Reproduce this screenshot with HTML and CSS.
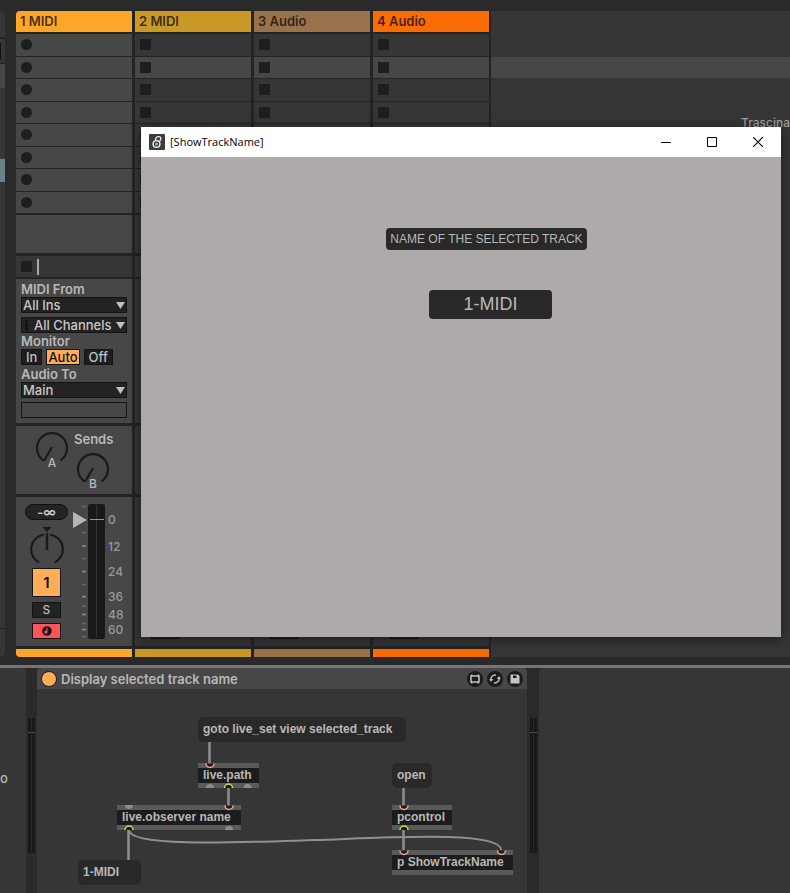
FILE: index.html
```html
<!DOCTYPE html>
<html lang="en">
<head>
<meta charset="utf-8">
<meta name="viewport" content="width=device-width, initial-scale=1">
<title>Session</title>
<link rel="stylesheet" href="styles.css">
</head>
<body>
<svg class="defs" aria-hidden="true">
  <symbol id="knob" viewBox="0 0 34 34"><path d="M8.500 29.500A15 15 0 1 1 25.500 29.500" fill="none" stroke="#1a1a1a" stroke-width="2.200"/><path d="M17 16L9 30" stroke="#1a1a1a" stroke-width="2.200"/></symbol>
  <symbol id="arrow" viewBox="0 0 9 7"><path d="M0 0h9L4.500 7z" fill="#c0c0c0"/></symbol>
</svg>

<main class="session">
  <aside class="edge" aria-hidden="true"><i class="edge-top"></i><i class="edge-mark"></i><i class="edge-lit"></i><i class="edge-scroll"></i><i class="edge-foot"></i></aside>

  <section class="tracks">
    <article class="track selected">
      <h2 class="name amber">1 MIDI</h2>
      <div class="slots"><button aria-label="Record clip 1"></button><button aria-label="Record clip 2"></button><button aria-label="Record clip 3"></button><button aria-label="Record clip 4"></button><button aria-label="Record clip 5"></button><button aria-label="Record clip 6"></button><button aria-label="Record clip 7"></button><button aria-label="Record clip 8"></button></div>
      <div class="blank"></div>
      <div class="status"><button class="stop" aria-label="Stop track"></button><i class="cursor"></i></div>
      <div class="io">
        <label for="midi-from">MIDI From</label>
        <span class="pick"><select id="midi-from"><option>All Ins</option></select><svg><use href="#arrow"/></svg></span>
        <span class="pick channels"><select aria-label="Channel"><option>All Channels</option></select><svg><use href="#arrow"/></svg><i class="dots"></i></span>
        <span class="label">Monitor</span>
        <div class="monitor"><button>In</button><button class="on">Auto</button><button>Off</button></div>
        <label class="spaced" for="audio-to">Audio To</label>
        <span class="pick"><select id="audio-to"><option>Main</option></select><svg><use href="#arrow"/></svg></span>
        <input class="blank-field" type="text" aria-label="Output channel">
      </div>
      <div class="sends">
        <div class="knob"><svg><use href="#knob"/></svg><span>A</span></div>
        <div class="send-b"><span class="label">Sends</span><div class="knob"><svg><use href="#knob"/></svg><span>B</span></div></div>
      </div>
      <div class="mixer">
        <div class="strip">
          <output class="peak">-∞</output>
          <svg class="pan" viewBox="0 0 34 38"><path d="M12.500 1h9L17 6z" fill="#1a1a1a"/><path d="M9 36.500A15 15 0 0 1 14 8.500M20 8.500A15 15 0 0 1 25 36.500" fill="none" stroke="#1a1a1a" stroke-width="2.200"/><path d="M17 7v17" stroke="#1a1a1a" stroke-width="2.400"/></svg>
          <button class="active">1</button>
          <button class="solo">S</button>
          <button class="arm" aria-label="Arm"><svg viewBox="0 0 10 10"><circle cx="5" cy="5" r="4.800" fill="#171717"/><path d="M5.500 1.500v4.500a1.600 1.600 0 1 1-1.500-1.500h.5v-3z" fill="#ff5559"/></svg></button>
        </div>
        <div class="fader">
          <svg viewBox="0 0 33 135"><g stroke="#696969" stroke-width="1.500"><path d="M9 2.500h4M9 28.500h4M9 42h4M9 54.500h4M9 67.500h4M9 80.500h4M9 93h4M9 102h4M9 110.500h4M9 119.500h4M9 125.500h4M9 132.500h4"/></g><g stroke="#888" stroke-width="1.500"><path d="M9 42h4M9 67.500h4M9 92.500h4M9 110.500h4M9 125.500h4"/></g><rect x="15" width="17" height="135" rx="2" fill="#191919"/><path d="M23.500 1v133" stroke="#333"/><path d="M17 15.500h14" stroke="#999"/></svg>
          <input type="range" min="0" max="119" value="111" aria-label="Volume">
        </div>
        <ol class="scale"><li>0</li><li>12</li><li>24</li><li>36</li><li>48</li><li>60</li></ol>
      </div>
      <div class="foot amber"></div>
    </article>

    <article class="track">
      <h2 class="name gold">2 MIDI</h2>
      <div class="slots"><button aria-label="Stop 1"></button><button aria-label="Stop 2"></button><button aria-label="Stop 3"></button><button aria-label="Stop 4"></button><button aria-label="Stop 5"></button><button aria-label="Stop 6"></button><button aria-label="Stop 7"></button><button aria-label="Stop 8"></button></div>
      <div class="blank"></div><div class="status"></div><div class="io"></div><div class="sends"></div>
      <div class="mixer"><div class="strip"><button class="arm" aria-label="Arm"></button></div></div>
      <div class="foot gold"></div>
    </article>
    <article class="track">
      <h2 class="name brown">3 Audio</h2>
      <div class="slots"><button aria-label="Stop 1"></button><button aria-label="Stop 2"></button><button aria-label="Stop 3"></button><button aria-label="Stop 4"></button><button aria-label="Stop 5"></button><button aria-label="Stop 6"></button><button aria-label="Stop 7"></button><button aria-label="Stop 8"></button></div>
      <div class="blank"></div><div class="status"></div><div class="io"></div><div class="sends"></div>
      <div class="mixer"><div class="strip"><button class="arm" aria-label="Arm"></button></div></div>
      <div class="foot brown"></div>
    </article>
    <article class="track">
      <h2 class="name orange">4 Audio</h2>
      <div class="slots"><button aria-label="Stop 1"></button><button aria-label="Stop 2"></button><button aria-label="Stop 3"></button><button aria-label="Stop 4"></button><button aria-label="Stop 5"></button><button aria-label="Stop 6"></button><button aria-label="Stop 7"></button><button aria-label="Stop 8"></button></div>
      <div class="blank"></div><div class="status"></div><div class="io"></div><div class="sends"></div>
      <div class="mixer"><div class="strip"><button class="arm" aria-label="Arm"></button></div></div>
      <div class="foot orange"></div>
    </article>
  </section>

  <section class="drop"><div class="drop-row"></div><p>Trascina</p></section>

  <section class="window">
    <header class="titlebar">
      <svg class="app" viewBox="0 0 16 16"><rect width="16" height="16" rx="1" fill="#3c3c3c"/><circle cx="7.500" cy="10" r="3.400" fill="none" stroke="#f2f2f2" stroke-width="1.400"/><path d="M6.500 6.500C6.500 1.500 12 1.500 11.800 5 11.600 7 10.500 7.500 9.500 8" fill="none" stroke="#f2f2f2" stroke-width="1.300"/><circle cx="7.500" cy="10" r="1.500" fill="#62c8c4"/></svg>
      <h1>[ShowTrackName]</h1>
      <button aria-label="Minimize"><svg viewBox="0 0 10 10"><path d="M0 5.500h10" stroke="#000"/></svg></button>
      <button aria-label="Maximize"><svg viewBox="0 0 10 10"><path d="M.5.5h9v9h-9z" fill="none" stroke="#000"/></svg></button>
      <button aria-label="Close"><svg viewBox="0 0 10 10"><path d="M0 0l10 10M10 0L0 10" stroke="#000" stroke-width="1.100"/></svg></button>
    </header>
    <div class="view">
      <p class="caption">NAME OF THE SELECTED TRACK</p>
      <p class="readout">1-MIDI</p>
    </div>
  </section>
</main>

<section class="devices">
  <div class="chain-prev">o</div>
  <div class="meter"><i></i><i></i></div>
  <article class="device">
    <header class="device-bar">
      <button class="power" aria-label="Device on"></button>
      <h2>Display selected track name</h2>
      <button class="round" aria-label="Edit"><svg viewBox="0 0 16 16"><path d="M4 5h8v6H4zM4.800 3.500V5M11.200 3.500V5M4.800 11v1.500M11.200 11v1.500" fill="none" stroke="#bdbdbd" stroke-width="1.600"/></svg></button>
      <button class="round" aria-label="Swap"><svg viewBox="0 0 16 16"><path d="M4 9.500A4.200 4.200 0 0 1 9 4.200M12 6.500A4.200 4.200 0 0 1 7 11.800" fill="none" stroke="#bdbdbd" stroke-width="1.500"/><path d="M2.200 8h4L4 11zM9.800 8h4L12 5z" fill="#bdbdbd"/></svg></button>
      <button class="round" aria-label="Save"><svg viewBox="0 0 16 16"><path d="M3.500 3.500h7.500l1.500 1.500v7.500h-9z" fill="#c4c4c4"/><path d="M6 4.500h3.500v2.500H6z" fill="#1b1b1b"/></svg></button>
    </header>
    <div class="patch">
      <button class="msg goto">goto live_set view selected_track</button>
      <div class="obj path">live.path</div>
      <div class="obj observer">live.observer name</div>
      <button class="msg result">1-MIDI</button>
      <button class="msg open">open</button>
      <div class="obj pcontrol">pcontrol</div>
      <div class="obj sub">p ShowTrackName</div>
      <svg class="cables" viewBox="0 0 490 204">
        <g fill="none" stroke="#8f8f8f" stroke-width="2.500"><path d="M172.500 53v22M191.500 99v18M91.500 141v30M366.500 99v18M366.500 141v20"/><path d="M92 141C92 159 213 153 278 151S464 141 464 161" stroke-width="2"/></g>
        <g fill="#8c8c8c"><path d="M169 99a4 4 0 0 1 8 0zM206.500 99a4 4 0 0 1 8 0zM88 116a4 4 0 0 0 8 0zM188 141a4 4 0 0 1 8 0z"/></g>
        <g fill="#1c1c1c" stroke="#f5a895" stroke-width="1.500"><path d="M169 74.500a4 4 0 0 0 8 0M188 116.500a4 4 0 0 0 8 0M363 116.500a4 4 0 0 0 8 0M363 161.500a4 4 0 0 0 8 0M460.500 161.500a4 4 0 0 0 8 0"/></g>
        <g fill="#1c1c1c" stroke="#cbdc50" stroke-width="1.500"><path d="M187.500 99a4 4 0 0 1 8 0M88 141a4 4 0 0 1 8 0M363 141a4 4 0 0 1 8 0"/></g>
      </svg>
    </div>
  </article>
  <div class="meter"><i></i><i></i></div>
  <div class="chain-next"></div>
</section>
</body>
</html>
```

FILE: styles.css
```css
* { box-sizing: border-box; }
body {
  margin: 0;
  min-height: 100vh;
  display: flex;
  flex-direction: column;
  overflow: hidden;
  background: #2a2a2a;
  color: #b8b8b8;
  font: 500 13px/16px Inter, sans-serif;
}
h1, h2, p, ol { margin: 0; padding: 0; font: inherit; }
button, select, input { margin: 0; padding: 0; border: 0; border-radius: 0; font: inherit; color: inherit; appearance: none; background: none; }
svg { display: block; }
.defs { position: absolute; width: 0; height: 0; }

.session { position: relative; display: flex; padding: 11px 0 8px; border-bottom: 3px solid #757575; }

.edge { display: flex; flex-direction: column; width: 5px; margin-right: 11px; background: #363636; border-radius: 0 5px 5px 0; }
.edge-top { height: 28px; border-bottom: 2px solid #232323; }
.edge-mark { height: 25px; border-bottom: 1px solid #232323; background: linear-gradient(#101010, #101010) 0 4px / 1px 17px no-repeat; }
.edge-lit { height: 24px; background: #474747; }
.edge-scroll { height: 23px; margin-top: 71px; background: #6b818a; }
.edge-foot { flex: 1; margin-bottom: 28px; border-bottom: 1px solid #232323; }

.tracks { display: flex; gap: 3px; padding-right: 2px; background: #242424; border-radius: 4px 0 0 4px; }
.track { display: flex; flex-direction: column; width: 116px; }
.track > * { background: #363636; }
.selected > * { background: #474747; }
.name { height: 21px; margin-bottom: 2px; padding-left: 4px; font-weight: 600; line-height: 21px; color: rgb(20 15 10 / 80%); }
.selected .name { border-top-left-radius: 4px; }
.track > .amber { background: #ffa52a; }
.track > .gold { background: #ca9925; }
.track > .brown { background: #99724b; }
.track > .orange { background: #f96c03; }
.slots { display: grid; grid-template-rows: repeat(8, 1fr); gap: 1px; height: 179px; }
.track > .slots { background: #242424; }
.slots button { display: flex; align-items: center; padding-left: 5px; background: #363636; }
.slots button:nth-child(2), .selected .slots button { background: #474747; }
.slots button::before, .stop { content: ""; width: 11px; height: 11px; background: #1e1e1e; }
.selected .slots button::before { border-radius: 50%; }
.blank { height: 38px; margin: 2px 0 3px; }
.status { display: flex; align-items: center; gap: 5px; height: 21px; margin-bottom: 2px; padding-left: 5px; }
.selected .status { background: #363636; }
.cursor { width: 2px; height: 16px; background: #a8a8a8; }

.io { display: flex; flex-direction: column; height: 144px; margin-bottom: 3px; padding: 2px 5px 5px; }
.io label, .label { font-weight: 600; }
.io .spaced { margin-top: 1px; }
.pick { display: grid; align-items: center; height: 16px; border: 1px solid #141414; background: #232323; color: #c8c8c8; }
.pick > * { grid-area: 1 / 1; }
.pick select { width: 100%; height: 14px; padding-left: 1px; line-height: 14px; }
.pick svg { justify-self: end; width: 9px; height: 7px; margin-right: 1px; pointer-events: none; }
.channels { margin-top: 4px; }
.channels select { padding-left: 12px; }
.dots { width: 3px; height: 12px; margin-left: 3px; background: radial-gradient(#111 1px, transparent 2px) 0 0 / 3px 4px; }
.monitor { display: flex; gap: 4px; }
.monitor button { height: 16px; padding: 0 4px; border: 1px solid #141414; background: #1e1e1e; line-height: 14px; color: #c0c0c0; }
.monitor .on { padding: 0 1px; background: #ffad56; color: #111; }
.blank-field { height: 16px; margin-top: 4px; border: 1px solid #141414; }

.sends { display: flex; gap: 7px; height: 68px; margin-bottom: 3px; padding: 5px 0 0 19px; }
.send-b { display: flex; flex-direction: column; gap: 5px; width: 34px; }
.send-b .label { margin-left: -2px; }
.knob { display: grid; width: 34px; height: 38px; justify-items: center; }
.knob > * { grid-area: 1 / 1; }
.knob svg { width: 34px; height: 34px; }
.knob span { align-self: end; font-size: 12px; line-height: 12px; }

.mixer { display: flex; height: 149px; margin-bottom: 3px; padding: 7px 0 7px 9px; }
.strip { display: flex; flex-direction: column; align-items: center; width: 43px; margin-right: 5px; }
.strip > * { flex-shrink: 0; }
.peak { width: 43px; height: 16px; border: 1px solid #111; border-radius: 8px; background: #242424; color: #c8c8c8; text-align: center; font-weight: 600; line-height: 14px; }
.pan { width: 34px; height: 38px; margin-top: 6px; }
.strip button { width: 29px; height: 16px; border: 1px solid #141414; }
.strip .active { height: 29px; margin-top: 4px; background: #ffad56; color: #111; font-size: 15px; font-weight: 600; }
.strip .solo { margin-top: 5px; background: #232323; font-size: 12px; line-height: 14px; }
.strip .arm { display: grid; place-items: center; margin-top: auto; background: #232323; }
.selected .strip .arm { background: #ff5559; }
.arm svg { width: 10px; height: 10px; }
.fader { display: grid; width: 33px; height: 135px; }
.fader > * { grid-area: 1 / 1; }
.fader svg { width: 33px; height: 135px; }
.fader input { width: 14px; height: 135px; writing-mode: vertical-lr; direction: rtl; }
.fader input::-webkit-slider-thumb { appearance: none; width: 14px; height: 16px; background: #b5b5b5; clip-path: polygon(0 0, 100% 50%, 0 100%); }
.scale { display: grid; grid-template-rows: 27px 25px 25px 18px 15px 15px; margin: 8px 0 0 2px; list-style: none; font-size: 12px; line-height: 15px; color: #999; }
.foot { height: 8px; }
.selected .foot { border-bottom-left-radius: 4px; }

.drop { flex: 1; min-width: 0; background: #363636; }
.drop-row { height: 21px; margin-top: 46px; background: #474747; }
.drop p { margin-top: 36px; text-align: right; white-space: nowrap; color: #a0a0a0; font-size: 12px; line-height: 18px; }

.window { position: absolute; top: 127px; left: 141px; right: 9px; background: #aeaaa9; box-shadow: 0 2px 12px rgb(0 0 0 / 50%); }
.titlebar { display: flex; align-items: center; height: 30px; padding-left: 8px; background: #fff; color: #000; }
.titlebar .app { width: 16px; height: 16px; margin-right: 5px; }
.titlebar h1 { flex: 1; font: 11px/30px "Open Sans", sans-serif; }
.titlebar button { display: grid; place-items: center; width: 46px; height: 30px; }
.titlebar button svg { width: 10px; height: 10px; }
.view { position: relative; height: 480px; font-family: "Liberation Sans", sans-serif; font-weight: 400; text-align: center; white-space: nowrap; color: #b8b8b8; }
.view p { position: absolute; border-radius: 4px; background: #292929; }
.view .caption { top: 71px; left: 245px; width: 201px; font-size: 12px; line-height: 22px; }
.view .readout { top: 133px; left: 288px; width: 123px; font-size: 18px; line-height: 29px; }

.devices { flex: 1; display: flex; min-height: 225px; }
.chain-prev { width: 26px; padding-top: 102px; background: #363636; border-top-right-radius: 4px; }
.meter { display: flex; gap: 1px; width: 7px; height: 135px; margin: 50px 2px 0; }
.meter i { flex: 1; background: linear-gradient(#181818 14px, #555 14px 15px, #181818 15px); }
.device { width: 490px; margin-right: 1px; background: #363636; border-radius: 4px 4px 0 0; overflow: hidden; }
.device-bar { display: flex; align-items: center; gap: 4px; height: 21px; padding: 0 4px; background: #474747; }
.device-bar h2 { flex: 1; font-weight: 600; }
.power { width: 16px; height: 16px; border: 1px solid #1b1b1b; border-radius: 50%; background: #ffad56; }
.round { width: 16px; height: 16px; border-radius: 50%; background: #1b1b1b; }
.patch { position: relative; height: 204px; font: bold 12px/25px "Liberation Sans", sans-serif; color: #b8b8b8; white-space: nowrap; }
.msg, .obj { position: absolute; height: 25px; padding-left: 5px; text-align: left; }
.msg { border-radius: 5px; background: #292929; }
.obj { border: solid #5a5a5a; border-width: 5px 0; background: #1c1c1c; line-height: 15px; }
.goto { top: 28px; left: 161px; width: 208px; }
.path { top: 74px; left: 161px; width: 61px; }
.observer { top: 116px; left: 80px; width: 124px; }
.result { top: 171px; left: 41px; width: 63px; }
.open { top: 74px; left: 355px; width: 40px; }
.pcontrol { top: 116px; left: 355px; width: 60px; }
.sub { top: 161px; left: 355px; width: 121px; }
.cables { position: absolute; top: 0; left: 0; width: 490px; height: 204px; pointer-events: none; }
.chain-next { flex: 1; background: #363636; border-top-left-radius: 4px; }
```
